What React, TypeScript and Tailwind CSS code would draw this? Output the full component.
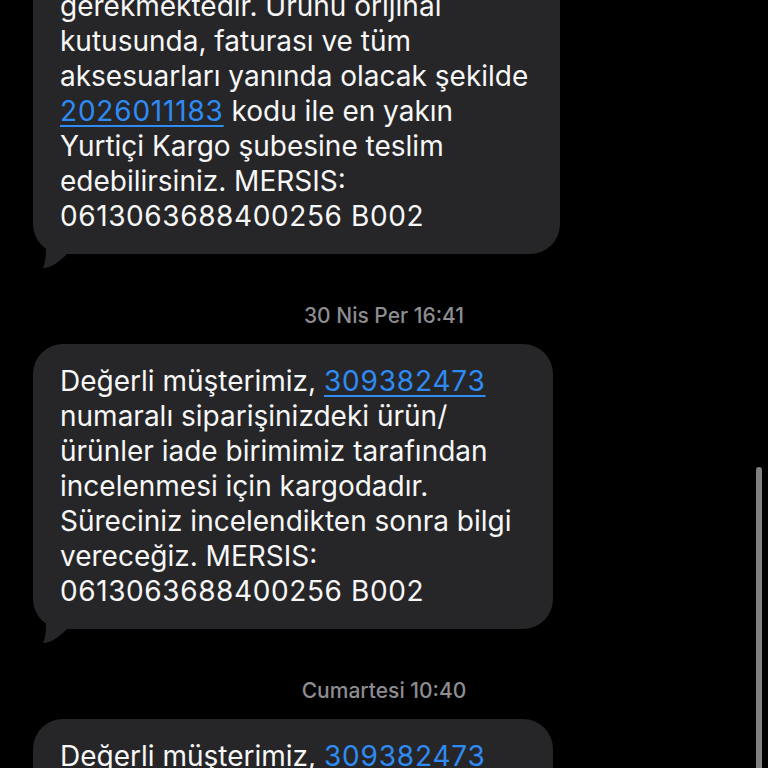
import React from "react";

type Part = string | { link: string };

function Line({ parts }: { parts: Part[] }) {
  return (
    <div className="whitespace-pre">
      {parts.map((p, i) => {
        if (typeof p !== "string") {
          return (
            <span
              key={i}
              className="text-[#2f8bf3] tracking-[0.8px] underline decoration-2 underline-offset-[4px]"
            >
              {p.link}
            </span>
          );
        }
        // mersis line: digits run a bit wider in the original font
        const numeric = /^[0-9 B]+$/.test(p);
        return (
          <span key={i} className={numeric ? "tracking-[0.6px]" : ""}>
            {p}
          </span>
        );
      })}
    </div>
  );
}

function Bubble({ lines, width }: { lines: Part[][]; width: string }) {
  return (
    <div className="pl-[33px]">
      <div className={`relative ${width} rounded-[30px] bg-[#262628] pl-[27px] pr-4 py-[20px]`}>
        {lines.map((l, i) => (
          <Line key={i} parts={l} />
        ))}
        <svg
          className="absolute left-0 bottom-[-16px]"
          width="40"
          height="32"
          viewBox="0 0 40 32"
        >
          <path
            d="M13 0 L13 12 C13 20 12 25 10 30 C18 30 26 24 34 16 L34 0 Z"
            fill="#262628"
          />
        </svg>
      </div>
    </div>
  );
}

function Stamp({ text }: { text: string }) {
  return (
    <div className="text-center text-[21px] font-medium leading-none text-[#8d8d92] mt-[51px] mb-[18px]">
      {text}
    </div>
  );
}

export default function App() {
  const first: Part[][] = [
    ["gerekmektedir. Ürünü orijinal"],
    ["kutusunda, faturası ve tüm"],
    ["aksesuarları yanında olacak şekilde"],
    [{ link: "2026011183" }, " kodu ile en yakın"],
    ["Yurtiçi Kargo şubesine teslim"],
    ["edebilirsiniz. MERSIS:"],
    ["0613063688400256 B002"],
  ];
  const second: Part[][] = [
    ["Değerli müşterimiz, ", { link: "309382473" }],
    ["numaralı siparişinizdeki ürün/"],
    ["ürünler iade birimimiz tarafından"],
    ["incelenmesi için kargodadır."],
    ["Süreciniz incelendikten sonra bilgi"],
    ["vereceğiz. MERSIS:"],
    ["0613063688400256 B002"],
  ];
  const third: Part[][] = [
    ["Değerli müşterimiz, ", { link: "309382473" }],
    ["numaralı siparişinizdeki ürün/"],
  ];

  return (
    <div
      className="relative h-[768px] w-[768px] overflow-hidden bg-black text-[#f7f7f7]"
      style={{ fontFamily: "Inter, Roboto, 'Liberation Sans', sans-serif" }}
    >
      <div className="-mt-[31px] text-[28px] leading-[35px]">
        <Bubble lines={first} width="w-[527px]" />
        <Stamp text="30 Nis Per 16:41" />
        <Bubble lines={second} width="w-[520px]" />
        <Stamp text="Cumartesi 10:40" />
        <Bubble lines={third} width="w-[520px]" />
      </div>
      <div className="absolute right-[6px] top-[467px] h-[320px] w-[6px] rounded-full bg-[#808080]" />
    </div>
  );
}
